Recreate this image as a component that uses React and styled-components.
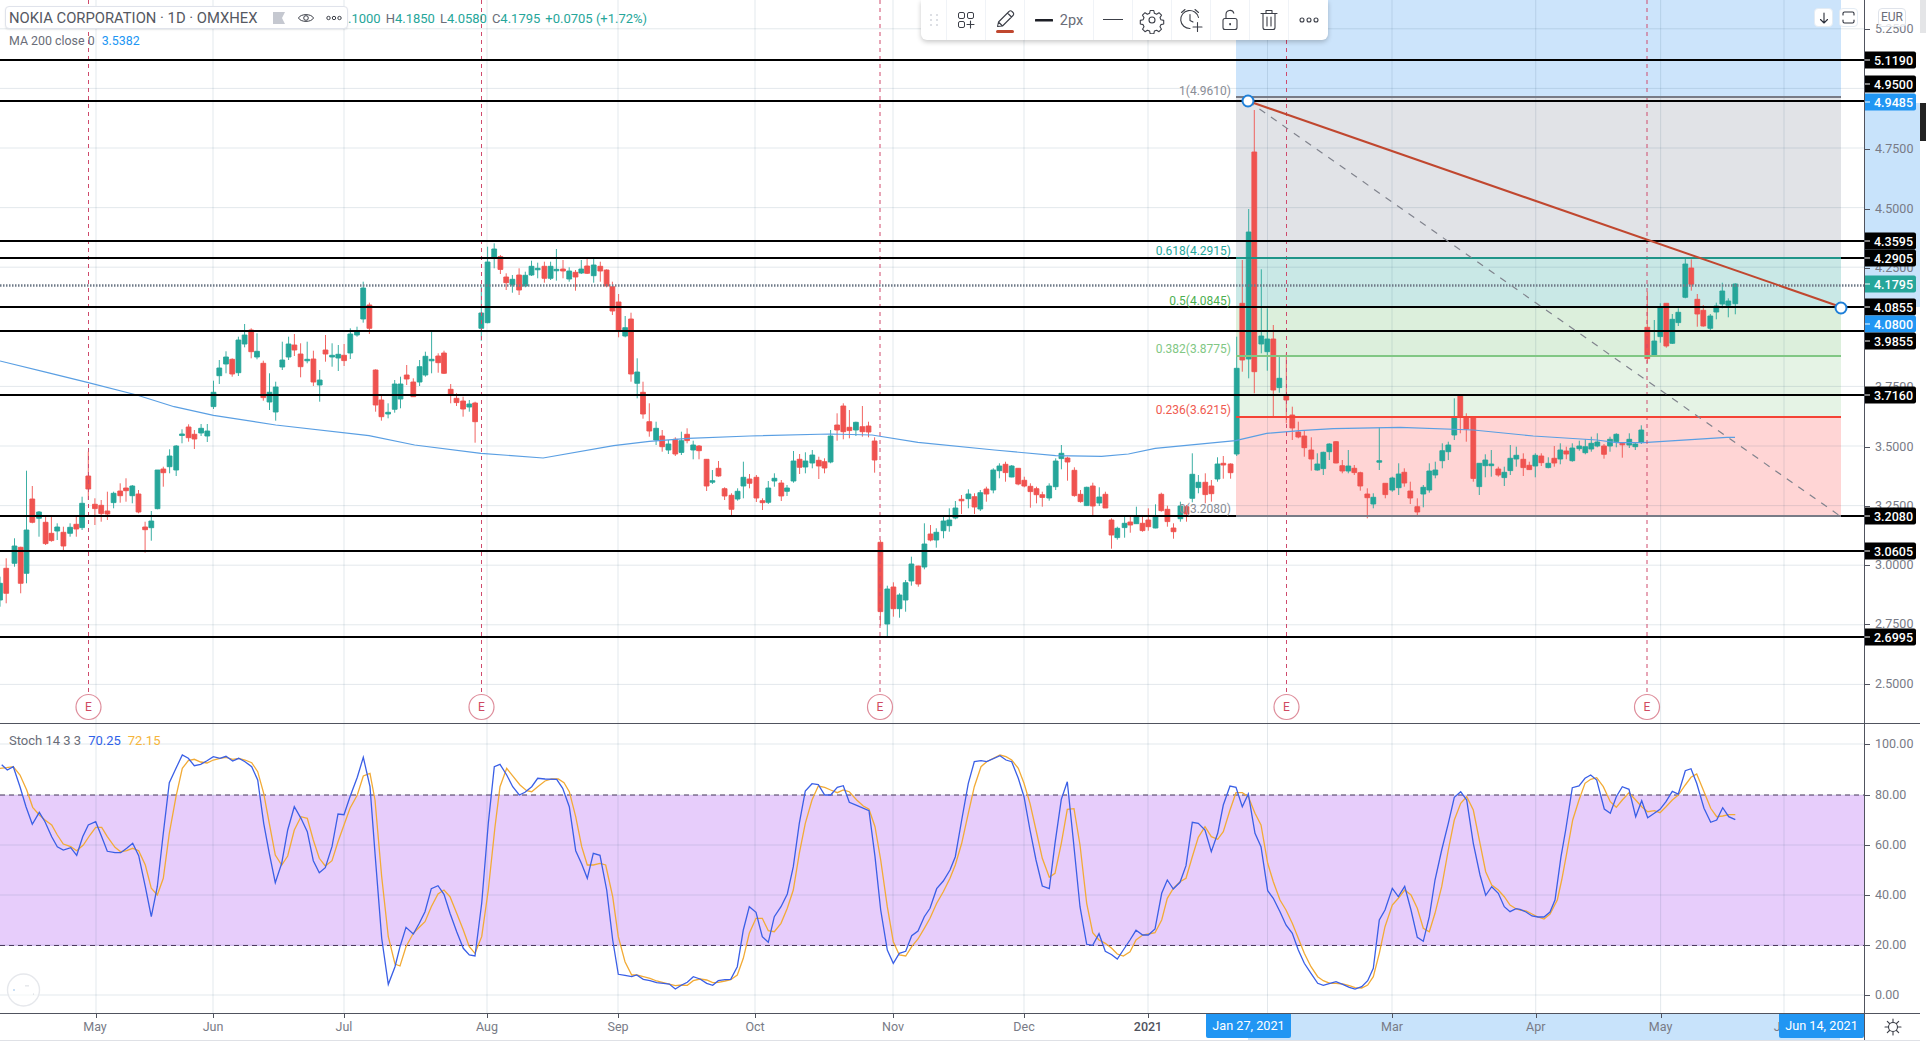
import React from 'react'
import styled, { createGlobalStyle } from 'styled-components'

const GlobalStyle = createGlobalStyle`
  html, body {
    margin: 0;
    padding: 0;
    background: #fff;
    overflow: hidden;
  }
  body {
    font-family: Roboto, "Liberation Sans", sans-serif;
  }
`

const GREEN = '#26a69a'
const RED = '#ef5350'
const GRID = 'rgba(42,80,110,0.13)'

// price -> page y
const priceY = (p) => 148 + (4.75 - p) * 238.4

const parseCandles = (text, x0, y0, sx, sy) =>
  text.trim().split(/,\s*/).map((row) => {
    const [x, c, wt, bt, bb, wb] = row.trim().split(/\s+/)
    return {
      x: x0 + Number(x) / sx,
      up: c === 'G',
      wt: y0 + Number(wt) / sy,
      bt: y0 + Number(bt) / sy,
      bb: y0 + Number(bb) / sy,
      wb: y0 + Number(wb) / sy,
    }
  })

const candles = [
  ...parseCandles(`
    0 G 1040 1060 1110 1130, 15 R 985 1015 1090 1120, 35 G 925 948 1000 1010, 50 R 950 952 1060 1090,
    64 G 722 900 1030 1060, 78 R 768 807 877 880, 94 G 843 846 865 920, 110 R 858 877 941 945,
    124 R 855 910 932 935, 138 G 880 891 903 930, 153 R 890 907 948 965, 169 G 880 892 910 920,
    184 R 860 883 897 920, 198 G 800 820 893 900, 213 R 665 738 777 810, 229 R 805 823 836 885,
    244 R 810 826 851 875, 259 R 785 843 852 870, 274 G 785 790 818 835, 290 R 760 783 797 818,
    304 R 745 774 782 815, 319 G 765 768 797 820, 334 R 780 792 846 850, 350 R 875 891 899 968,
    365 G 843 873 893 932, 380 G 720 720 836 838, 394 R 710 717 728 770, 409 G 658 678 710 730,
    425 G 645 648 720 738, 439 G 598 612 613 640, 455 R 583 591 623 635, 469 R 600 613 627 657,
    485 G 582 595 609 618, 500 G 582 603 618 636, 515 G 452 487 530 537, 529 G 390 414 437 462,
    545 G 364 381 402 430, 560 R 385 388 432 440, 575 G 320 330 428 438, 590 G 282 315 342 352,
    606 R 295 300 365 385, 620 G 310 364 381 388, 635 R 392 400 503 512, 650 G 430 487 516 540,
    665 G 455 471 546 572, 681 G 335 390 411 420, 696 G 320 342 381 390, 710 R 312 345 360 378,
    725 R 340 372 410 442, 741 G 335 388 392 400, 756 R 362 387 456 468, 771 G 420 450 465 515,
    785 R 315 360 372 395, 801 G 340 376 381 410, 816 G 345 373 384 423, 830 R 342 376 392 408,
    845 G 295 312 369 387, 861 G 290 303 315 320, 876 G 155 174 267 278, 891 R 218 225 295 312,
    906 R 418 420 525 545, 920 R 495 510 560 572, 936 G 520 547 552 565, 952 G 450 462 538 548,
    966 G 440 462 507 535, 981 R 405 435 447 465, 997 R 445 456 500 500, 1012 G 390 410 456 468,
    1026 G 365 379 435 440, 1041 G 305 388 392 430, 1057 R 370 378 398 428, 1071 R 362 369 430 432,
    1087 R 462 478 495 520, 1101 R 490 505 518 528, 1117 R 500 513 537 560, 1132 G 510 522 531 545,
    1146 R 515 519 575 638, 1161 G 170 249 295 332, 1176 G 50 96 278 280, 1192 G 40 57 81 115,
    1207 R 75 80 118 132, 1221 R 130 141 158 180, 1236 G 135 148 165 188, 1252 R 115 135 180 195,
    1267 G 125 136 168 172, 1282 G 92 109 135 138, 1297 G 98 115 116 145, 1313 R 95 109 145 158,
    1328 G 95 109 145 150, 1342 G 57 118 122 152, 1358 R 90 117 123 145, 1373 G 112 123 147 155,
    1388 R 120 127 141 182, 1402 G 90 117 129 132, 1416 R 85 108 130 132, 1432 G 85 105 137 158,
    1448 R 95 109 123 155, 1463 R 118 120 168 172, 1477 R 155 170 243 255, 1492 R 192 216 303 322,
    1508 G 258 293 318 322, 1522 R 248 267 432 455, 1537 G 385 426 460 505, 1551 R 455 487 552 566,
    1566 R 520 575 603 620
  `, 0, 230, 2.412, 3),
  ...parseCandles(`
    16 G 125 145 180 195, 32 R 150 168 200 215, 48 G 180 192 210 222, 66 R 172 178 222 228,
    82 G 155 182 217 225, 97 R 145 163 182 190, 113 G 182 195 210 238, 128 R 195 198 212 238,
    148 R 237 238 318 333, 163 G 270 302 305 312, 179 R 243 265 288 290, 195 R 322 326 348 360,
    213 R 340 346 388 405, 229 G 325 334 357 362, 244 G 245 292 318 355, 260 R 282 297 310 325,
    278 R 285 292 354 366, 294 R 355 362 368 390, 309 G 303 324 367 372, 325 G 280 295 303 320,
    343 R 300 309 348 363, 358 G 315 324 334 348, 375 G 213 243 303 308, 391 R 222 238 262 282,
    406 G 217 243 261 280, 424 G 210 225 249 265, 441 R 230 241 258 297, 456 R 235 245 264 280,
    472 G 150 168 246 250, 489 R 100 135 150 182, 505 R 70 78 155 178, 521 R 90 142 152 175,
    538 G 125 127 150 168, 555 R 78 140 155 170, 571 R 125 138 156 172, 587 R 172 183 240 278,
    602 R 480 487 695 737, 620 G 617 627 732 772, 636 R 607 621 686 710, 652 G 640 645 686 713,
    668 G 600 608 660 695, 683 G 530 552 603 617, 701 R 557 558 612 620, 717 G 430 492 561 568,
    733 R 435 462 480 484, 748 G 445 457 480 503, 767 G 410 423 452 475, 782 G 385 420 437 455,
    798 G 363 384 414 418, 814 R 345 358 362 402, 832 G 328 342 356 385, 848 R 340 350 381 402,
    863 G 330 338 387 393, 879 R 320 327 342 365, 897 G 265 270 330 340, 913 G 250 258 272 295,
    929 R 245 253 278 305, 945 G 255 258 291 292, 962 R 264 265 312 316, 978 R 290 301 318 322,
    994 R 310 319 335 383, 1010 R 320 326 344 370, 1025 R 335 344 352 380, 1043 G 310 318 354 362,
    1060 G 235 243 320 330, 1075 G 195 220 236 268, 1091 R 230 234 246 302, 1109 R 262 271 347 350,
    1125 R 330 343 365 368, 1141 G 320 322 377 378, 1157 R 308 318 378 405, 1174 G 322 351 369 378,
    1190 R 335 343 384 384, 1206 R 415 420 465 506, 1221 G 440 445 473 479, 1240 G 410 430 443 473,
    1255 R 405 426 435 458, 1271 G 380 408 431 432, 1287 R 410 430 452 455, 1302 R 385 420 440 452,
    1321 G 373 407 444 445, 1336 R 338 343 392 395, 1352 R 377 388 425 440, 1368 R 430 444 455 476,
    1386 G 365 378 416 425, 1402 R 375 380 402 425, 1417 G 220 283 355 367, 1433 G 285 307 323 340,
    1451 R 280 307 344 370, 1467 R 300 318 341 365, 1483 G 232 252 297 305, 1498 R 228 250 255 296,
    1517 R 250 252 278 296
  `, 650, 380, 2.613, 3),
  ...parseCandles(`
    110 G 350 445 702 708, 127 R 120 250 420 455, 146 G -33 36 417 475, 163 R -330 -204 455 520,
    184 G 148 348 372 400, 202 G 265 357 395 452, 220 R 315 357 510 590, 238 G 410 475 503 518,
    259 R 400 527 540 610, 277 R 560 585 624 660, 295 R 605 636 651 655, 313 R 632 648 683 710,
    334 R 652 690 717 752, 352 G 700 732 750 752, 370 G 695 697 746 765, 388 G 670 672 695 720,
    408 R 663 665 729 730, 427 R 720 737 753 760, 445 G 690 738 753 760, 463 R 735 745 758 765,
    481 R 755 758 798 812, 502 R 805 822 833 895, 520 G 820 832 852 865, 538 G 622 722 725 750,
    556 R 790 790 824 835, 577 G 770 774 810 815, 596 G 730 762 803 825, 613 R 745 757 789 800,
    631 R 785 813 834 852, 652 R 835 860 876 885, 670 G 795 802 822 862, 688 G 730 753 810 818,
    706 G 725 750 765 775, 727 G 670 692 722 745, 745 G 665 675 695 720, 763 G 535 592 645 660,
    781 R 522 524 592 640, 799 R 580 590 627 665, 820 R 590 590 775 785, 838 G 730 730 800 825,
    856 G 703 720 737 772, 874 G 690 732 737 770, 895 R 740 747 765 770, 913 G 740 757 773 798,
    931 G 675 715 752 765, 949 G 680 706 717 740, 970 R 700 718 743 768, 988 R 725 736 749 750,
    1006 G 700 706 738 772, 1024 R 700 708 728 738, 1045 G 712 730 743 745, 1063 R 678 715 729 740,
    1081 G 670 690 717 733, 1099 R 680 693 702 718, 1117 G 670 684 722 725, 1138 G 662 678 686 692,
    1156 G 658 680 698 703, 1174 G 650 670 687 695, 1192 G 640 666 678 682
  `, 1200, 220, 3, 3),
  ...parseCandles(`
    12 R 672 678 703 716, 30 G 650 658 678 695, 49 G 640 643 665 682, 67 R 668 670 673 713,
    88 G 640 658 675 684, 106 G 668 672 680 690, 124 G 616 630 667 672, 142 R 215 322 416 430,
    163 G 300 363 407 410, 181 G 250 262 350 368, 199 R 250 250 378 383, 217 G 282 298 370 372,
    235 G 265 277 308 318, 256 G 115 132 232 235, 274 R 118 144 193 212, 292 R 222 238 282 320,
    310 R 255 271 318 320, 331 G 282 288 325 335, 349 G 248 258 276 298, 367 G 188 213 252 265,
    385 G 235 243 256 292, 406 G 190 192 251 283
  `, 1600, 220, 3, 3),
]

const candlePath = (up) =>
  candles.filter((c) => c.up === up).map((c) => {
    const h = Math.max(c.bb - c.bt, 1.5)
    const x = c.x.toFixed(1)
    return `M${x} ${c.wt.toFixed(1)}V${c.wb.toFixed(1)}M${(c.x - 2.4).toFixed(1)} ${c.bt.toFixed(1)}h4.8v${h.toFixed(1)}h-4.8z`
  }).join('')

const pts = (text, x0, y0, sx, sy) =>
  text.trim().split(/\s+/).map((p) => {
    const [x, y] = p.split(',').map(Number)
    return `${(x0 + x / sx).toFixed(1)},${(y0 + y / sy).toFixed(1)}`
  }).join(' ')

const maLine = [
  pts('0,393 115,428 213,458 330,495 420,530 515,556 665,585 890,617 1000,645 1160,670 1310,684 1480,647 1566,634', 0, 230, 2.412, 3),
  pts('100,175 260,168 470,162 580,165 700,187 900,210 1060,227 1180,229 1250,222 1320,205 1530,182', 650, 380, 2.613, 3),
  pts('200,640 300,632 400,626 600,622 820,630 1000,648 1190,660', 1200, 220, 3, 3),
  pts('50,668 130,668 380,652 405,652', 1600, 220, 3, 3),
].join(' ')

const stochK = [
  pts('5,224 22,240 40,230 60,290 78,350 97,403 118,367 135,395 155,440 172,470 190,480 212,473 230,496 248,440 265,405 287,395 305,440 322,484 345,488 362,488 380,475 398,460 416,497 436,590 454,680 472,590 490,430 508,278 528,235 547,195 565,205 583,227 602,223 621,212 640,200 660,205 678,199 698,213 716,205 735,215 755,230 773,270 791,400 808,490 826,578 845,520 863,420 883,350 903,385 922,425 940,512 958,548 976,533 996,470 1014,372 1032,374 1050,320 1072,262 1090,202 1110,290 1125,490 1145,745 1165,883 1185,830 1200,770 1218,712 1240,732 1258,700 1275,665 1294,596 1314,587 1332,613 1350,670 1370,725 1390,775 1408,795 1425,798 1445,640 1465,400 1483,230', 0, 690, 3, 3),
  pts('30,43 50,75 68,110 88,135 105,127 125,110 143,85 165,87 200,88 218,115 238,170 257,302 275,342 292,385 310,310 330,316 350,420 368,570 385,673 405,676 425,680 440,675 460,688 480,692 500,698 520,700 538,702 556,717 575,705 592,697 610,680 630,687 650,700 668,706 685,692 705,689 722,688 742,650 760,540 778,470 798,487 817,560 835,577 853,500 873,470 892,432 910,350 928,220 946,123 966,101 985,104 1004,135 1022,135 1042,112 1060,107 1078,157 1100,166 1137,182 1155,320 1172,480 1192,600 1210,640 1228,610 1247,604 1265,557 1284,543 1303,500 1320,475 1340,416 1360,393 1380,360 1396,320 1415,210 1435,100 1453,35 1473,32 1490,35', 490, 750, 3, 3),
  pts('0,17 18,30 35,35 55,85 72,140 90,240 108,330 127,408 148,416 165,280 184,148 202,95 220,270 240,470 260,583 278,586 297,551 316,604 335,614 352,627 370,600 390,570 408,541 428,555 445,555 465,537 485,430 502,390 520,417 540,397 558,347 577,217 595,220 615,240 634,305 653,250 670,165 690,108 708,112 727,170 745,132 765,250 783,290 803,422 820,445 840,485 858,525 877,550 895,600 913,640 933,670 953,700 970,706 990,700 1008,695 1028,703 1048,712 1065,717 1085,710 1103,692 1120,655 1138,510 1155,480 1177,415 1195,440 1214,409 1233,480 1252,562 1270,574 1288,500 1305,390 1325,300 1345,220 1363,142 1382,125 1400,150 1420,280 1440,375 1457,436 1475,410 1495,430 1513,470 1530,485 1548,476 1560,478', 1000, 750, 3, 3),
  '1526,912 1532,916 1538,917 1544,917 1550,912',
  pts('165,450 183,320 197,240 217,113 237,108 255,85 272,75 290,90 313,177 331,190 349,140 367,110 387,118 407,200 425,152 443,203 463,190 480,178 498,155 517,124 535,132 556,62 573,56 590,100 612,175 632,217 650,210 668,173 686,200 706,209', 1500, 750, 3, 3),
].join(' ')

const stochD = [
  pts('0,235 20,233 40,230 60,255 80,300 98,352 118,375 135,390 155,405 172,435 190,462 212,470 230,482 250,465 270,435 287,412 305,412 322,440 345,472 362,485 380,482 398,475 416,482 436,525 454,595 472,615 490,565 508,430 528,320 547,235 565,212 583,208 602,216 621,219 640,210 660,205 678,202 698,208 716,205 735,210 755,218 773,245 791,310 808,400 826,495 845,525 863,498 883,420 903,380 922,385 940,450 958,505 976,528 996,512 1014,455 1032,405 1050,355 1072,315 1090,258 1110,250 1125,330 1145,560 1165,740 1185,822 1200,828 1218,770 1240,730 1258,712 1275,695 1294,650 1314,612 1332,600 1350,620 1370,670 1390,720 1408,770 1425,790 1445,740 1465,600', 0, 690, 3, 3),
  pts('15,230 30,110 50,55 70,80 90,105 110,122 125,125 143,110 165,93 185,87 205,87 222,98 238,125 257,200 275,290 292,345 310,345 330,340 347,345 368,440 385,560 405,635 425,675 440,675 460,680 480,685 500,693 520,698 556,707 575,705 592,706 610,692 630,687 650,690 668,698 685,697 705,693 722,689 742,675 760,625 778,550 798,505 817,505 835,542 853,545 873,520 892,475 910,420 928,310 946,220 966,150 985,108 1004,112 1022,120 1042,128 1060,120 1078,125 1100,150 1120,168 1137,178 1155,230 1172,330 1192,470 1210,575 1228,615 1247,618 1265,590 1284,567 1303,535 1320,505 1340,460 1360,425 1380,385 1396,345 1415,280 1435,190 1453,110 1473,50 1490,35', 490, 750, 3, 3),
  pts('0,15 18,20 35,30 55,55 72,100 90,160 108,240 127,325 148,382 165,370 184,280 202,178 222,176 240,285 260,460 278,548 297,570 316,580 335,595 352,612 370,618 390,605 408,570 428,555 445,552 465,548 485,510 502,445 520,415 540,395 558,385 577,320 595,262 615,230 634,260 653,268 670,245 690,180 708,128 727,128 745,140 765,190 783,225 803,340 820,395 840,450 858,480 877,520 895,565 913,610 933,650 953,680 970,692 990,700 1008,700 1028,702 1048,707 1065,713 1085,714 1103,705 1120,680 1138,610 1155,530 1177,465 1195,445 1214,420 1233,435 1252,475 1270,535 1288,545 1305,490 1325,410 1345,300 1363,210 1382,160 1400,140 1420,180 1440,280 1457,365 1475,405 1495,420 1513,440 1530,465 1548,476 1560,480', 1000, 750, 3, 3),
  '1526,911 1532,914 1538,917 1544,919 1550,914',
  pts('172,450 185,390 200,310 218,210 237,150 255,100 272,88 290,83 310,110 331,155 349,172 367,150 387,128 407,150 425,170 443,185 463,182 480,188 498,170 517,150 535,135 556,105 573,82 590,72 612,125 632,175 650,200 668,198 686,194 706,194', 1500, 750, 3, 3),
].join(' ')

const monthX = [96, 213, 344, 487, 618, 755, 893, 1024, 1148, 1267.5, 1392, 1535.7, 1660.6, 1784]
const priceGrid = [5.25, 4.75, 4.5, 4.25, 3.75, 3.5, 3.25, 3, 2.75, 2.5, 5]
const stochGrid = [744, 795, 845, 895, 945, 995]
const earningsX = [88.5, 481.5, 880, 1286.5, 1647]
// drawn levels, page y taken from the price scale
const levels = [60, 101, 241, 258, 307, 331, 395, 516, 551, 636.5]

const fibBands = [
  { top: 98, bottom: 258, fill: '#e1e3e7' },
  { top: 258, bottom: 307, fill: '#c9e8e6' },
  { top: 307, bottom: 356, fill: '#dcefdc' },
  { top: 356, bottom: 417, fill: '#e5f3e5' },
  { top: 417, bottom: 516, fill: '#ffd5d5' },
]
const fibLines = [
  { y: 97.5, color: '#787b86' },
  { y: 258, color: '#1f9488' },
  { y: 356, color: '#81c784' },
  { y: 417, color: '#f44336' },
  { y: 516, color: '#787b86' },
]
const fibLabels = [
  { y: 90, color: '#8a8d96', text: '1(4.9610)' },
  { y: 250, color: '#26a69a', text: '0.618(4.2915)' },
  { y: 300, color: '#4caf50', text: '0.5(4.0845)' },
  { y: 348, color: '#81c784', text: '0.382(3.8775)' },
  { y: 409, color: '#f05a50', text: '0.236(3.6215)' },
  { y: 508, color: '#8a8d96', text: '0(3.2080)' },
]

const scaleTicks = [
  { y: 29, text: '5.2500' }, { y: 148.5, text: '4.7500' }, { y: 208.5, text: '4.5000' }, { y: 268, text: '4.2500' },
  { y: 387, text: '3.7500' }, { y: 447, text: '3.5000' }, { y: 506, text: '3.2500' }, { y: 565, text: '3.0000' },
  { y: 624, text: '2.7500' }, { y: 684, text: '2.5000' },
]
const priceTags = [
  { y: 60, text: '5.1190' }, { y: 84, text: '4.9500' }, { y: 101.5, text: '4.9485', bg: '#2196f3' },
  { y: 241, text: '4.3595' }, { y: 258, text: '4.2905' }, { y: 284, text: '4.1795', bg: GREEN },
  { y: 307, text: '4.0855' }, { y: 324, text: '4.0800', bg: '#2196f3' }, { y: 341, text: '3.9855' },
  { y: 395, text: '3.7160' }, { y: 516, text: '3.2080' }, { y: 551, text: '3.0605' }, { y: 637, text: '2.6995' },
]
const stochTicks = [
  { y: 744, text: '100.00' }, { y: 795, text: '80.00' }, { y: 845, text: '60.00' },
  { y: 895, text: '40.00' }, { y: 945, text: '20.00' }, { y: 995, text: '0.00' },
]
const timeLabels = [
  { x: 95, text: 'May' }, { x: 213, text: 'Jun' }, { x: 344, text: 'Jul' }, { x: 487, text: 'Aug' },
  { x: 618, text: 'Sep' }, { x: 755, text: 'Oct' }, { x: 893, text: 'Nov' }, { x: 1024, text: 'Dec' },
  { x: 1148, text: '2021', strong: true }, { x: 1392, text: 'Mar' }, { x: 1535.7, text: 'Apr' },
  { x: 1660.6, text: 'May' }, { x: 1784, text: 'Jun' },
]

const Page = styled.div`
  width: 1926px;
  height: 1042px;
  display: flex;
  overflow: hidden;
  background: #fff;
`
const Workspace = styled.div`
  width: 1920px;
  height: 1040px;
  display: grid;
  grid-template-columns: 1864px 56px;
  grid-template-rows: 723px 290px 27px;
  border-bottom: 1px solid #dfe1e6;
`
const Rail = styled.div`
  width: 6px;
  display: flex;
  flex-direction: column;
`
const RailTop = styled.div`
  height: 33px;
  background: #e4e5e7;
`
const RailGap = styled.div`
  height: 70px;
`
const RailThumb = styled.div`
  height: 38px;
  background: #222;
`
const Pane = styled.div`
  position: relative;
  ${({ $separated }) => $separated && 'border-top: 1px solid #50535e; box-sizing: border-box;'}
`
const Canvas = styled.svg`
  display: block;
  width: 1864px;
  height: ${({ $h }) => $h}px;
`
const PriceAxis = styled.div`
  position: relative;
  box-sizing: border-box;
  border-left: 1px solid #50535e;
  ${({ $separated }) => $separated && 'border-top: 1px solid #50535e;'}
  overflow: hidden;
`
const AxisRange = styled.div`
  position: absolute;
  left: 0;
  right: 0;
  top: 103px;
  height: 204px;
  background: #c8e3fb;
`
const ScaleTick = styled.div`
  position: absolute;
  left: 0;
  width: 52px;
  transform: translateY(-50%);
  padding-left: 10px;
  font-size: 12.5px;
  line-height: 16px;
  color: #787b86;
  &::before {
    content: '';
    position: absolute;
    left: 0;
    top: 8px;
    width: 5px;
    height: 1px;
    background: #50535e;
  }
`
const PriceTag = styled.div`
  position: absolute;
  left: 0;
  width: 51px;
  height: 17px;
  box-sizing: border-box;
  padding-left: 9px;
  transform: translateY(-50%);
  border-radius: 0 2px 2px 0;
  font-size: 12.5px;
  font-weight: 500;
  line-height: 17px;
  color: #fff;
  background: ${({ $bg }) => $bg || '#000'};
  &::before {
    content: '';
    position: absolute;
    left: 0;
    top: 8px;
    width: 5px;
    height: 1px;
    background: #fff;
  }
`
const CurrencyButton = styled.div`
  position: absolute;
  top: 8px;
  left: 13px;
  width: 28px;
  height: 19px;
  box-sizing: border-box;
  border: 1px solid #dfe3ea;
  border-radius: 4px;
  background: rgba(255, 255, 255, 0.8);
  font-size: 12px;
  line-height: 17px;
  text-align: center;
  color: #6a6d78;
`
const TimeAxis = styled.div`
  position: relative;
  box-sizing: border-box;
  border-top: 1px solid #50535e;
  overflow: hidden;
`
const TimeRange = styled.div`
  position: absolute;
  top: 0;
  bottom: 0;
  left: 1248px;
  width: 592px;
  background: #c8e3fb;
`
const TimeLabel = styled.div`
  position: absolute;
  top: 4px;
  transform: translateX(-50%);
  font-size: 12.5px;
  line-height: 18px;
  color: ${({ $strong }) => ($strong ? '#50535e' : '#787b86')};
  font-weight: ${({ $strong }) => ($strong ? 500 : 400)};
`
const TimeTick = styled.div`
  position: absolute;
  top: 0;
  width: 1px;
  height: 4px;
  background: #50535e;
`
const DateFlag = styled.div`
  position: absolute;
  top: 0;
  height: 24px;
  width: 85px;
  border-radius: 0 0 2px 2px;
  background: #2196f3;
  color: #fff;
  font-size: 12.7px;
  line-height: 24px;
  text-align: center;
`
const Corner = styled.div`
  box-sizing: border-box;
  border-top: 1px solid #50535e;
  border-left: 1px solid #50535e;
  display: flex;
  align-items: center;
  justify-content: center;
  color: #3c3f48;
`
const Legend = styled.div`
  position: absolute;
  left: 5px;
  top: 6px;
  display: flex;
  flex-direction: column;
  gap: 3px;
`
const TitleRow = styled.div`
  display: flex;
  align-items: center;
`
const TitleBox = styled.div`
  width: 343px;
  height: 23px;
  box-sizing: border-box;
  display: flex;
  align-items: center;
  padding: 1px 0 0 3px;
  background: #fff;
  border: 1px solid #e0e3eb;
  border-radius: 4px;
  box-shadow: 0 1px 2px rgba(0, 0, 0, 0.08);
`
const TitleText = styled.span`
  width: 263px;
  font-size: 14.8px;
  color: #555862;
  white-space: nowrap;
`
const TitleIcons = styled.div`
  display: flex;
  align-items: center;
  gap: 11px;
  color: #3c3f48;
`
const Ohlc = styled.div`
  display: flex;
  gap: 5px;
  padding-top: 2px;
  font-size: 13px;
  color: ${GREEN};
  white-space: nowrap;
  & b {
    font-weight: 400;
    color: #6a6d78;
  }
`
const IndicatorRow = styled.div`
  display: flex;
  align-items: center;
  gap: 7px;
  padding: 1px 0 0 4px;
  font-size: 12.4px;
  line-height: 16px;
  color: #6a6d78;
`
const Value = styled.span`
  color: ${({ $c }) => $c};
`
const StochLegend = styled(IndicatorRow)`
  position: absolute;
  left: 5px;
  top: 8px;
  font-size: 13px;
`
const Toolbar = styled.div`
  position: absolute;
  left: 921px;
  top: 0;
  height: 40px;
  display: flex;
  background: #fff;
  border-radius: 0 0 6px 6px;
  box-shadow: 0 2px 5px rgba(0, 0, 0, 0.22);
`
const ToolSlot = styled.div`
  width: ${({ $w }) => $w || 39}px;
  box-sizing: border-box;
  display: flex;
  align-items: center;
  justify-content: center;
  gap: 7px;
  color: #3c3f48;
  font-size: 14px;
  border-right: ${({ $last }) => ($last ? 'none' : '1px solid #f0f3f7')};
`
const WidthLabel = styled.span`
  color: #6a6d78;
  font-size: 14.5px;
`
const ViewButtons = styled.div`
  position: absolute;
  left: 1814px;
  top: 8px;
  display: flex;
  gap: 6px;
`
const ViewButton = styled.div`
  width: 19px;
  height: 19px;
  box-sizing: border-box;
  display: flex;
  align-items: center;
  justify-content: center;
  background: #fff;
  border: 1px solid #e4ecf4;
  border-radius: 4px;
  color: #2a2e39;
`
const FibLabel = styled.text`
  font-size: 12px;
  text-anchor: end;
  fill: ${({ $c }) => $c};
`
const EarningsLetter = styled.text`
  font-size: 12px;
  text-anchor: middle;
  fill: #cf4a62;
`

const Line = ({ d, w = 1.1 }) => <path d={d} fill="none" stroke="currentColor" strokeWidth={w} strokeLinecap="round" strokeLinejoin="round" />

const ToolIcon = ({ children, size = 28 }) => (
  <svg width={size} height={size} viewBox="0 0 28 28">{children}</svg>
)

function MainChart() {
  return (
    <Canvas $h={723} viewBox="0 0 1864 723">
      <rect x="1236" y="0" width="605" height="98" fill="#cce4fb" />
      {fibBands.map((b) => (
        <rect key={b.top} x="1236" y={b.top} width="605" height={b.bottom - b.top} fill={b.fill} />
      ))}
      {priceGrid.map((p) => (
        <line key={p} x1="0" x2="1864" y1={priceY(p)} y2={priceY(p)} stroke={GRID} strokeWidth="1" />
      ))}
      {monthX.map((x) => (
        <line key={x} x1={x} x2={x} y1="0" y2="723" stroke={GRID} strokeWidth="1" />
      ))}
      <path d={candlePath(true)} fill={GREEN} stroke={GREEN} strokeWidth="0.9" />
      <path d={candlePath(false)} fill={RED} stroke={RED} strokeWidth="0.9" />
      <polyline points={maLine} fill="none" stroke="#5a9fe3" strokeWidth="1.2" />
      <line x1="0" x2="1864" y1="285.5" y2="285.5" stroke="#6f7a88" strokeWidth="2.4" strokeDasharray="1.5 1.5" />
      {earningsX.map((x) => (
        <line key={x} x1={x} x2={x} y1="0" y2="694" stroke="#cf4a6c" strokeWidth="1" strokeDasharray="4 4" />
      ))}
      {levels.map((y) => (
        <rect key={y} x="0" width="1864" y={Math.round(y) - 1} height="2" fill="#000" />
      ))}
      {fibLines.map((l) => (
        <rect key={l.y} x="1236" width="605" y={Math.floor(l.y) - 1} height="2" fill={l.color} />
      ))}
      {fibLabels.map((l) => (
        <FibLabel key={l.text} x="1231" y={l.y + 4.5} $c={l.color}>{l.text}</FibLabel>
      ))}
      <line x1="1248" y1="101" x2="1840" y2="516" stroke="#80838d" strokeWidth="1.2" strokeDasharray="7 7" />
      <line x1="1248" y1="101" x2="1841" y2="307" stroke="#c0472f" strokeWidth="2" />
      <circle cx="1248" cy="101" r="5.5" fill="#fff" stroke="#1e7fd8" strokeWidth="2" />
      <circle cx="1841" cy="308" r="5.5" fill="#fff" stroke="#1e7fd8" strokeWidth="2" />
      {earningsX.map((x) => (
        <g key={x}>
          <circle cx={x} cy="707" r="12.5" fill="#fff" stroke="#de8d9b" strokeWidth="1.2" />
          <EarningsLetter x={x} y="711">E</EarningsLetter>
        </g>
      ))}
    </Canvas>
  )
}

function StochChart() {
  return (
    <Canvas $h={289} viewBox="0 724 1864 289">
      <rect x="0" y="795" width="1864" height="151" fill="#e7cdfb" />
      {stochGrid.map((y) => (
        <line key={y} x1="0" x2="1864" y1={y} y2={y} stroke={GRID} strokeWidth="1" />
      ))}
      {monthX.map((x) => (
        <line key={x} x1={x} x2={x} y1="724" y2="1013" stroke={GRID} strokeWidth="1" />
      ))}
      <line x1="0" x2="1864" y1="795" y2="795" stroke="#4c3a5e" strokeWidth="1" strokeDasharray="5 4" />
      <line x1="0" x2="1864" y1="945.5" y2="945.5" stroke="#4c3a5e" strokeWidth="1" strokeDasharray="5 4" />
      <polyline points={stochD} fill="none" stroke="#f2ab36" strokeWidth="1.3" />
      <polyline points={stochK} fill="none" stroke="#3a5fe6" strokeWidth="1.3" />
      <circle cx="23.5" cy="990" r="16" fill="rgba(255,255,255,0.6)" stroke="#e6e8ec" strokeWidth="1.4" />
      <circle cx="14" cy="990" r="0.8" fill="#8ab8e8" />
      <circle cx="33.5" cy="994" r="0.6" fill="#c8ccd4" />
      <rect x="25" y="985.5" width="4" height="0.8" fill="#d0d3da" />
    </Canvas>
  )
}

function App() {
  return (
    <Page>
      <GlobalStyle />
      <Workspace>
        <Pane>
          <MainChart />
          <Legend>
            <TitleRow>
              <TitleBox>
                <TitleText>NOKIA CORPORATION · 1D · OMXHEX</TitleText>
                <TitleIcons>
                  <svg width="14" height="14" viewBox="0 0 14 14"><path d="M1 1h12l-3 6 3 6H1z" fill="#c5c8d0" /></svg>
                  <svg width="18" height="16" viewBox="0 0 18 16">
                    <path d="M1.5 8C3.5 3.5 14.5 3.5 16.500 8C14.500 12.500 3.500 12.500 1.500 8Z" fill="none" stroke="currentColor" strokeWidth="1" />
                    <circle cx="9" cy="8" r="2.300" fill="none" stroke="currentColor" strokeWidth="1" />
                  </svg>
                  <svg width="16" height="6" viewBox="0 0 16 6">
                    <circle cx="2.500" cy="3" r="1.700" fill="none" stroke="currentColor" strokeWidth="1" />
                    <circle cx="8" cy="3" r="1.700" fill="none" stroke="currentColor" strokeWidth="1" />
                    <circle cx="13.500" cy="3" r="1.700" fill="none" stroke="currentColor" strokeWidth="1" />
                  </svg>
                </TitleIcons>
              </TitleBox>
              <Ohlc>
                <span>.1000</span>
                <span><b>H</b>4.1850</span>
                <span><b>L</b>4.0580</span>
                <span><b>C</b>4.1795</span>
                <span>+0.0705 (+1.72%)</span>
              </Ohlc>
            </TitleRow>
            <IndicatorRow>
              <span>MA 200 close 0</span>
              <Value $c="#2196f3">3.5382</Value>
            </IndicatorRow>
          </Legend>
          <Toolbar>
            <ToolSlot $w={26}>
              <svg width="10" height="14" viewBox="0 0 10 14" fill="#d5d8de">
                <circle cx="2" cy="2" r="1.100" /><circle cx="8" cy="2" r="1.100" />
                <circle cx="2" cy="7" r="1.100" /><circle cx="8" cy="7" r="1.100" />
                <circle cx="2" cy="12" r="1.100" /><circle cx="8" cy="12" r="1.100" />
              </svg>
            </ToolSlot>
            <ToolSlot>
              <ToolIcon>
                <rect x="6.500" y="6.500" width="6" height="6" rx="1.500" fill="none" stroke="currentColor" />
                <rect x="15.500" y="6.500" width="6" height="6" rx="1.500" fill="none" stroke="currentColor" />
                <rect x="6.500" y="15.500" width="6" height="6" rx="1.500" fill="none" stroke="currentColor" />
                <Line d="M18.500 15v7M15 18.500h7" />
              </ToolIcon>
            </ToolSlot>
            <ToolSlot>
              <ToolIcon>
                <Line d="M6.500 20.500l1-4.500L18 5.500a2 2 0 0 1 3 0l1 1a2 2 0 0 1 0 3L11.500 20z M6.500 20.500l5-.5 M16.500 7l4 4 M7.500 16l4 4" />
                <rect x="5" y="24" width="18" height="3" rx="1.500" fill="#c0472f" />
              </ToolIcon>
            </ToolSlot>
            <ToolSlot $w={69}>
              <svg width="18" height="3" viewBox="0 0 18 3"><rect width="18" height="2.500" rx="0.500" fill="#1d1f26" /></svg>
              <WidthLabel>2px</WidthLabel>
            </ToolSlot>
            <ToolSlot>
              <svg width="20" height="2" viewBox="0 0 20 2"><rect width="20" height="1" fill="#3c3f48" /></svg>
            </ToolSlot>
            <ToolSlot>
              <ToolIcon>
                <Line d="M12.200 4.500h3.600l.6 2.800 2.200.9 2.400-1.500 2.500 2.500-1.500 2.400.9 2.200 2.800.6v3.600l-2.800.6-.9 2.200 1.500 2.400-2.500 2.500-2.400-1.500-2.200.9-.6 2.800h-3.600l-.6-2.800-2.200-.9-2.400 1.500-2.500-2.500 1.500-2.400-.9-2.200-2.800-.6v-3.600l2.800-.6.900-2.200-1.500-2.400 2.500-2.500 2.400 1.500 2.200-.9z" />
                <circle cx="14" cy="14" r="3" fill="none" stroke="currentColor" strokeWidth="1.100" />
              </ToolIcon>
            </ToolSlot>
            <ToolSlot>
              <ToolIcon>
                <Line d="M21.500 11.500A9 9 0 1 0 13 22.500M13 8.500v6l3 1.500M4.500 6.500l3.500-3M18 3.500l3.500 3M20.500 16.500v9M16 21h9" />
              </ToolIcon>
            </ToolSlot>
            <ToolSlot>
              <ToolIcon>
                <rect x="7" y="12.500" width="14" height="11" rx="2" fill="none" stroke="currentColor" strokeWidth="1.100" />
                <Line d="M10 12.500V8.500a4 4 0 0 1 7.800-1.300" />
                <rect x="13.200" y="17" width="1.800" height="2.400" rx="0.800" fill="currentColor" />
              </ToolIcon>
            </ToolSlot>
            <ToolSlot>
              <ToolIcon>
                <Line d="M6 7.500h16M11 7.500V4.500h6v3M8 7.500v14a2 2 0 0 0 2 2h8a2 2 0 0 0 2-2v-14M12 11v9M16 11v9" />
              </ToolIcon>
            </ToolSlot>
            <ToolSlot $last>
              <svg width="20" height="6" viewBox="0 0 20 6">
                <circle cx="3" cy="3" r="2" fill="none" stroke="currentColor" strokeWidth="1.100" />
                <circle cx="10" cy="3" r="2" fill="none" stroke="currentColor" strokeWidth="1.100" />
                <circle cx="17" cy="3" r="2" fill="none" stroke="currentColor" strokeWidth="1.100" />
              </svg>
            </ToolSlot>
          </Toolbar>
          <ViewButtons>
            <ViewButton>
              <svg width="12" height="12" viewBox="0 0 12 12"><Line d="M6 1v10M2.500 7.500L6 11l3.500-3.500" /></svg>
            </ViewButton>
            <ViewButton>
              <svg width="13" height="13" viewBox="0 0 13 13">
                <Line d="M1 4V2.500A1.500 1.500 0 0 1 2.500 1h8A1.500 1.500 0 0 1 12 2.500V4M1 9v1.500A1.500 1.500 0 0 0 2.500 12h8a1.500 1.500 0 0 0 1.500-1.500V9" />
              </svg>
            </ViewButton>
          </ViewButtons>
        </Pane>
        <PriceAxis>
          <AxisRange />
          {scaleTicks.map((t) => (
            <ScaleTick key={t.text} style={{ top: t.y }}>{t.text}</ScaleTick>
          ))}
          {priceTags.map((t) => (
            <PriceTag key={t.text} $bg={t.bg} style={{ top: t.y }}>{t.text}</PriceTag>
          ))}
          <CurrencyButton>EUR</CurrencyButton>
        </PriceAxis>
        <Pane $separated>
          <StochChart />
          <StochLegend>
            <span>Stoch 14 3 3</span>
            <Value $c="#2f62e8">70.25</Value>
            <Value $c="#f5b53a">72.15</Value>
          </StochLegend>
        </Pane>
        <PriceAxis $separated>
          {stochTicks.map((t) => (
            <ScaleTick key={t.text} style={{ top: t.y - 724 }}>{t.text}</ScaleTick>
          ))}
        </PriceAxis>
        <TimeAxis>
          <TimeRange />
          {monthX.map((x) => (
            <TimeTick key={x} style={{ left: x }} />
          ))}
          {timeLabels.map((t) => (
            <TimeLabel key={t.x} $strong={t.strong} style={{ left: t.x }}>{t.text}</TimeLabel>
          ))}
          <DateFlag style={{ left: 1206 }}>Jan 27, 2021</DateFlag>
          <DateFlag style={{ left: 1779 }}>Jun 14, 2021</DateFlag>
        </TimeAxis>
        <Corner>
          <svg width="18" height="18" viewBox="0 0 18 18">
            <circle cx="9" cy="9" r="4.500" fill="none" stroke="currentColor" strokeWidth="1.100" />
            <Line d="M9 1v3M9 14v3M1 9h3M14 9h3M3.300 3.300l2.200 2.200M12.500 12.500l2.200 2.200M14.700 3.300l-2.200 2.200M5.500 12.500l-2.200 2.200" />
          </svg>
        </Corner>
      </Workspace>
      <Rail>
        <RailTop />
        <RailGap />
        <RailThumb />
      </Rail>
    </Page>
  )
}

export default App
